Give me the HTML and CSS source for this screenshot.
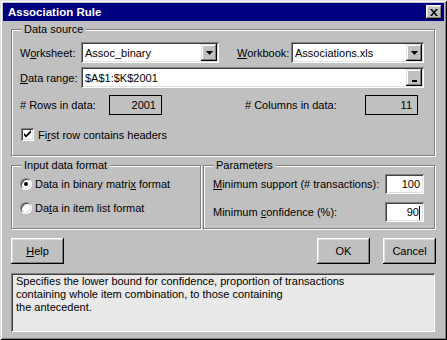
FILE: index.html
```html
<!DOCTYPE html>
<html lang="en">
<head>
  <meta charset="UTF-8" />
  <title>Association Rule</title>
  <link rel="stylesheet" href="styles.css">
</head>
<body>
  <div class="dialog">
    <div class="titlebar">
      <span class="title">Association Rule</span>
      <span class="close-btn">
        <svg width="8" height="7" viewBox="0 0 8 7"><path d="M0 0h2l2 2.4L6 0h2L5 3.5 8 7H6L4 4.6 2 7H0l3-3.5z"/></svg>
      </span>
    </div>

    <div class="content">
      <div class="group source">
        <span class="group-title">Data source</span>

        <div class="row row-field">
          <span class="lbl lbl-sheet">W<u>o</u>rksheet:</span>
          <div class="field combo combo-sheet">
            <span class="value">Assoc_binary</span>
            <span class="side-btn"><svg width="7" height="4" viewBox="0 0 7 4"><path d="M0 0h7L3.5 4z"/></svg></span>
          </div>
          <span class="lbl lbl-book"><u>W</u>orkbook:</span>
          <div class="field combo combo-book">
            <span class="value">Associations.xls</span>
            <span class="side-btn"><svg width="7" height="4" viewBox="0 0 7 4"><path d="M0 0h7L3.5 4z"/></svg></span>
          </div>
        </div>

        <div class="row row-field row-range">
          <span class="lbl lbl-sheet"><u>D</u>ata range:</span>
          <div class="field combo combo-range">
            <span class="value">$A$1:$K$2001</span>
            <span class="side-btn"><span class="ref-mark"></span></span>
          </div>
        </div>

        <div class="row row-count">
          <span class="lbl lbl-rows"># Rows in data:</span>
          <span class="count">2001</span>
          <span class="lbl lbl-cols"># Columns in data:</span>
          <span class="count">11</span>
        </div>

        <div class="row row-check">
          <span class="checkbox">
            <svg width="9" height="9" viewBox="0 0 9 9"><path d="M1 3l2 2 5-5v2.5l-5 5-2-2z"/></svg>
          </span>
          <span class="lbl">Fi<u>r</u>st row contains headers</span>
        </div>
      </div>

      <div class="lower">
        <div class="group format">
          <span class="group-title">Input data format</span>
          <div class="row row-radio">
            <span class="radio checked"></span>
            <span class="lbl">Data in binary matri<u>x</u> format</span>
          </div>
          <div class="row row-radio">
            <span class="radio"></span>
            <span class="lbl">Da<u>t</u>a in item list format</span>
          </div>
        </div>

        <div class="group params">
          <span class="group-title">Parameters</span>
          <div class="row row-param">
            <span class="lbl param-lbl"><u>M</u>inimum support (# transactions):</span>
            <div class="field num">100</div>
          </div>
          <div class="row row-param">
            <span class="lbl param-lbl">Minimum <u>c</u>onfidence (%):</span>
            <div class="field num">90<span class="caret"></span></div>
          </div>
        </div>
      </div>

      <div class="buttons">
        <button class="btn"><u>H</u>elp</button>
        <span class="spacer"></span>
        <button class="btn">OK</button>
        <button class="btn btn-cancel">Cancel</button>
      </div>

      <div class="description">
        Specifies the lower bound for confidence, proportion of transactions<br>
        containing whole item combination, to those containing<br>
        the antecedent.
      </div>
    </div>
  </div>
</body>
</html>
```

FILE: styles.css
```css
* {
  box-sizing: border-box;
}

body {
  margin: 0;
  font-family: 'Liberation Sans', Arial, sans-serif;
  font-size: 11px;
  color: #000;
  background: #c0c0c0;
}

.dialog {
  width: 447px;
  height: 340px;
  padding: 3px;
  background: #c0c0c0;
  box-shadow: inset 1px 1px #dfdfdf, inset -1px -1px #000,
              inset 2px 2px #fff, inset -2px -2px #808080;
}

.titlebar {
  height: 18px;
  background: #000080;
  display: flex;
  align-items: center;
  justify-content: space-between;
  padding: 0 2px 0 5px;
}

.title {
  color: #fff;
  font-weight: bold;
  font-size: 11.5px;
}

.close-btn {
  width: 16px;
  height: 14px;
  background: #c0c0c0;
  display: flex;
  align-items: center;
  justify-content: center;
  box-shadow: inset -1px -1px #000, inset 1px 1px #fff,
              inset -2px -2px #808080, inset 2px 2px #dfdfdf;
}

.content {
  padding: 8px 9px 0 8px;
}

.group {
  position: relative;
  border: 1px solid #808080;
  box-shadow: inset 1px 1px #fff, 1px 1px #fff;
}

.group-title {
  position: absolute;
  top: -8px;
  left: 10px;
  padding: 0 3px 0 2px;
  background: #c0c0c0;
  line-height: 14px;
}

.source {
  height: 127px;
  padding: 12px 10px 0 8px;
}

.row {
  display: flex;
  align-items: center;
}

.row-field {
  height: 21px;
}

.row-range {
  margin-top: 4px;
}

.lbl {
  white-space: nowrap;
}

.lbl-sheet {
  width: 61px;
}

.lbl-book {
  width: 54px;
  margin-left: 18px;
}

.field {
  height: 100%;
  background: #fff;
  box-shadow: inset 1px 1px #808080, inset -1px -1px #fff,
              inset 2px 2px #404040, inset -2px -2px #dfdfdf;
}

.combo {
  display: flex;
  align-items: center;
  padding: 2px;
}

.combo .value {
  flex: 1;
  padding-left: 2px;
}

.combo-sheet {
  width: 138px;
}

.combo-book {
  width: 133px;
}

.combo-range {
  width: 343px;
}

.side-btn {
  width: 16px;
  height: 17px;
  background: #c0c0c0;
  display: flex;
  align-items: center;
  justify-content: center;
  box-shadow: inset -1px -1px #000, inset 1px 1px #dfdfdf,
              inset -2px -2px #808080, inset 2px 2px #fff;
}

.ref-mark {
  width: 5px;
  height: 2px;
  margin-top: 7px;
  background: #000;
}

.row-count {
  height: 20px;
  margin-top: 7px;
}

.lbl-rows {
  width: 89px;
}

.lbl-cols {
  width: 120px;
  margin-left: 83px;
}

.count {
  width: 53px;
  height: 20px;
  border: 1px solid #000;
  text-align: right;
  padding-right: 5px;
  line-height: 18px;
}

.row-check {
  height: 13px;
  margin-top: 13px;
}

.checkbox {
  width: 13px;
  height: 13px;
  margin-left: 1px;
  margin-right: 4px;
  background: #fff;
  display: flex;
  align-items: center;
  justify-content: center;
  box-shadow: inset 1px 1px #808080, inset -1px -1px #fff,
              inset 2px 2px #404040, inset -2px -2px #dfdfdf;
}

.lower {
  display: flex;
  gap: 2px;
  margin-top: 9px;
}

.format {
  width: 190px;
  height: 64px;
  padding: 10px 0 0 8px;
}

.row-radio {
  height: 16px;
}

.row-radio + .row-radio {
  margin-top: 8px;
}

.radio {
  width: 12px;
  height: 12px;
  margin-right: 3px;
  border-radius: 50%;
  background: #fff;
  border: 1px solid;
  border-color: #808080 #fff #fff #808080;
  box-shadow: inset 1px 1px #404040, inset -1px -1px #dfdfdf;
  display: flex;
  align-items: center;
  justify-content: center;
}

.radio.checked::after {
  content: '';
  width: 4px;
  height: 4px;
  border-radius: 50%;
  background: #000;
}

.params {
  width: 232px;
  height: 64px;
  padding: 8px 10px 0 9px;
}

.row-param {
  height: 20px;
  justify-content: space-between;
}

.row-param + .row-param {
  margin-top: 8px;
}

.num {
  width: 39px;
  text-align: right;
  padding-right: 4px;
  line-height: 20px;
}

.caret {
  display: inline-block;
  width: 1px;
  height: 14px;
  background: #000;
  vertical-align: middle;
}

.buttons {
  display: flex;
  margin-top: 9px;
  height: 26px;
}

.spacer {
  flex: 1;
}

.btn {
  width: 53px;
  height: 26px;
  padding: 0;
  border: none;
  background: #c0c0c0;
  font-family: inherit;
  font-size: 11px;
  color: #000;
  box-shadow: inset -1px -1px #000, inset 1px 1px #fff,
              inset -2px -2px #808080, inset 2px 2px #dfdfdf;
}

.btn-cancel {
  margin-left: 13px;
  margin-right: -1px;
}

.description {
  margin-top: 9px;
  height: 59px;
  padding: 2px 5px;
  background: #e9e9e9;
  line-height: 13px;
  box-shadow: inset 1px 1px #808080, inset -1px -1px #fff,
              inset 2px 2px #404040, inset -2px -2px #dfdfdf;
}
```
